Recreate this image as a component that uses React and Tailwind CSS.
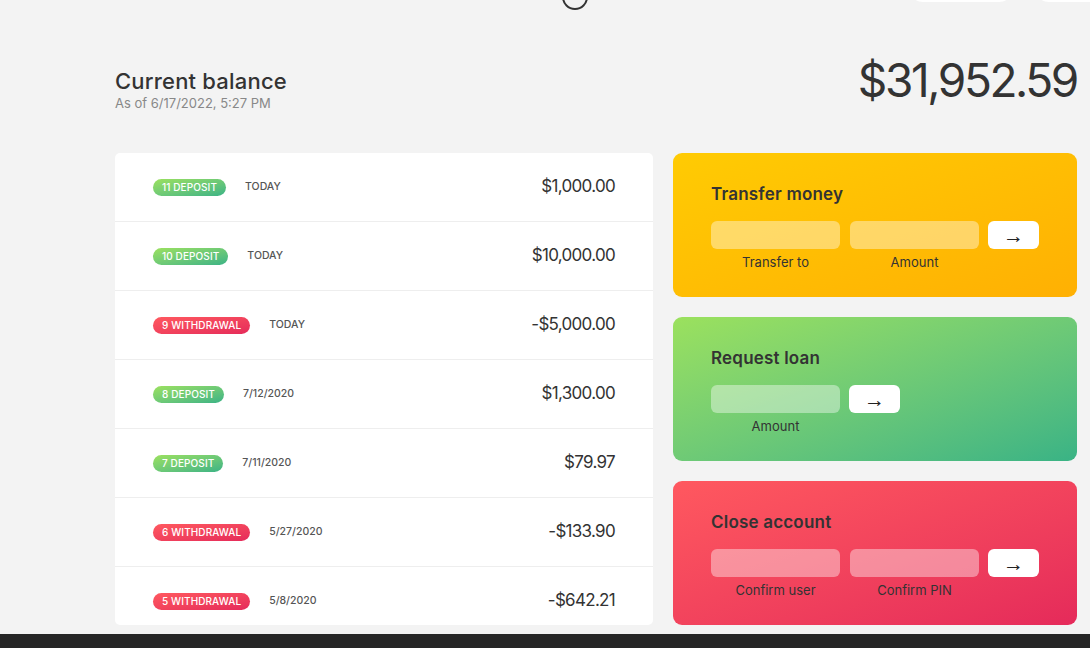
import React from 'react';

const movements = [
  { n: 11, type: 'deposit', date: 'Today', value: '$1,000.00' },
  { n: 10, type: 'deposit', date: 'Today', value: '$10,000.00' },
  { n: 9, type: 'withdrawal', date: 'Today', value: '-$5,000.00' },
  { n: 8, type: 'deposit', date: '7/12/2020', value: '$1,300.00' },
  { n: 7, type: 'deposit', date: '7/11/2020', value: '$79.97' },
  { n: 6, type: 'withdrawal', date: '5/27/2020', value: '-$133.90' },
  { n: 5, type: 'withdrawal', date: '5/8/2020', value: '-$642.21' },
];

function Movement({ m }) {
  const badge =
    m.type === 'deposit'
      ? 'bg-gradient-to-tl from-[#39b385] to-[#9be15d]'
      : 'bg-gradient-to-tl from-[#e52a5a] to-[#ff585f]';
  return (
    <div className="h-[69px] shrink-0 flex items-center pl-[38px] pr-[38px] border-b border-[#eee]">
      <span className={`${badge} h-[17px] leading-[17px] px-[9px] rounded-full text-white text-[10px] font-medium uppercase tracking-[0.1px]`}>
        {m.n} {m.type}
      </span>
      <span className="ml-[19px] text-[10.5px] font-medium uppercase text-[#555]">{m.date}</span>
      <span className="ml-auto text-[17px] text-[#333] tracking-[-0.7px]">{m.value}</span>
    </div>
  );
}

function Field({ label }) {
  return (
    <div className="flex flex-col items-center gap-[5px]">
      <div className="w-[129px] h-[28px] rounded-[6px] bg-white/40" />
      {label && <span className="text-[13px] leading-[16px] text-[#333]">{label}</span>}
    </div>
  );
}

function ArrowBtn() {
  return (
    <div
      className="-ml-[1px] w-[51px] h-[28px] rounded-[6px] bg-white flex items-center justify-center text-[21px] leading-none text-[#222]"
      style={{ fontFamily: '"Liberation Sans", sans-serif' }}
    >
      →
    </div>
  );
}

function OpCard({ title, gradient, children }) {
  return (
    <div className={`${gradient} h-[144px] rounded-[9px] pl-[38px] pt-[29px]`}>
      <div className="text-[17px] leading-[24px] font-semibold text-[#333] tracking-[0.2px]">{title}</div>
      <div className="mt-[15px] flex gap-[10px] items-start">{children}</div>
    </div>
  );
}

export default function App() {
  return (
    <div
      className="h-[648px] overflow-hidden bg-[#f3f3f3] flex flex-col"
      style={{ fontFamily: 'Inter, "Open Sans", sans-serif' }}
    >
      {/* nav, scrolled mostly out of view */}
      <div className="h-[10px] shrink-0 overflow-hidden flex items-end relative">
        <div className="ml-[562px] w-[26px] h-[26px] rounded-full border-2 border-[#333] shrink-0" />
        <div className="ml-[320px] mb-[8px] flex gap-[20px]">
          <div className="w-[106px] h-[30px] rounded-full bg-white" />
          <div className="w-[106px] h-[30px] rounded-full bg-white" />
        </div>
      </div>

      <main className="flex-1 ml-[115px] w-[962px] pt-[45px]">
        <div className="h-[98px] flex justify-between items-start">
          <div className="mt-[13px]">
            <div className="text-[22px] leading-[26px] font-medium text-[#333] tracking-[0.2px]">Current balance</div>
            <div className="text-[13px] leading-[18px] text-[#888]">As of 6/17/2022, 5:27 PM</div>
          </div>
          <div className="mt-[2px] text-[46px] leading-none text-[#333] tracking-[-2.4px]">$31,952.59</div>
        </div>

        <div className="grid grid-cols-[538px_404px] gap-[20px]">
          <div className="h-[472px] bg-white rounded-[5px] overflow-hidden flex flex-col">
            {movements.map((m) => (
              <Movement key={m.n} m={m} />
            ))}
          </div>

          <div className="flex flex-col gap-[20px]">
            <OpCard title="Transfer money" gradient="bg-gradient-to-br from-[#ffcb03] to-[#ffb003]">
              <Field label="Transfer to" />
              <Field label="Amount" />
              <ArrowBtn />
            </OpCard>
            <OpCard title="Request loan" gradient="bg-gradient-to-br from-[#9be15d] to-[#39b385]">
              <Field label="Amount" />
              <ArrowBtn />
            </OpCard>
            <OpCard title="Close account" gradient="bg-gradient-to-br from-[#ff585f] to-[#e52a5a]">
              <Field label="Confirm user" />
              <Field label="Confirm PIN" />
              <ArrowBtn />
            </OpCard>
          </div>
        </div>
      </main>

      <div className="h-[14px] shrink-0 bg-[#262626]" />
    </div>
  );
}
